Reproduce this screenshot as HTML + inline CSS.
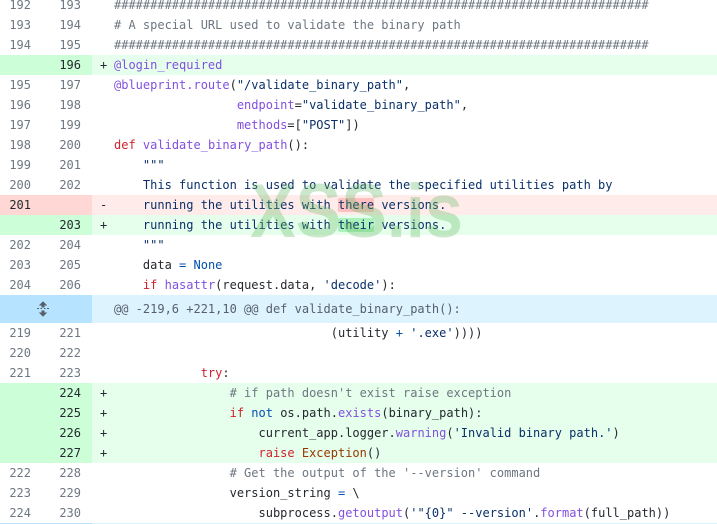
<!DOCTYPE html>
<html><head><meta charset="utf-8"><style>
*{margin:0;padding:0;box-sizing:border-box}
body{width:717px;height:524px;overflow:hidden;background:#fff;font-family:"DejaVu Sans Mono","Liberation Mono",monospace;font-size:12px;color:#24292f;position:relative}
.r{position:absolute;left:0;width:717px;height:20px;line-height:21px;white-space:pre}
.n1,.n2{position:absolute;top:0;height:100%;text-align:right;color:#6e7781}
.n1{left:0;width:31px}
.n2{left:31px;width:50px}
.g{position:absolute;left:0;top:0;width:92px;height:100%}
.s{position:absolute;left:100px;top:0}
.c{position:absolute;left:114px;top:0}
.add{background:#e6ffec}.add .g{background:#ccffd8}.add .n1,.add .n2,.del .n1,.del .n2{color:#24292f}
.del{background:#ffebe9}.del .g{background:#ffd7d5}
.cm{color:#6e7781}.k{color:#cf222e}.f{color:#8250df}.st{color:#0a3069}.b{color:#0550ae}.e{color:#953800}
.hd{background:#ffc1c0;border-radius:2px}.ha{background:#abf2bc;border-radius:2px}
.hunk{position:absolute;left:0;top:295px;width:717px;height:28px;background:#ddf4ff;line-height:28px;white-space:pre;color:#57606a}
.hunk .g{background:#b6e3ff;width:92px;height:28px}
.wm{position:absolute;left:250px;top:168px;font-family:"Liberation Sans",sans-serif;font-weight:bold;font-size:76px;color:rgba(95,185,95,0.32);transform:scaleX(0.9);transform-origin:left top;pointer-events:none}
</style></head><body>
<div class="r" style="top:-5px"><span class="n1">192</span><span class="n2">193</span><span class="c cm">##########################################################################</span></div>
<div class="r" style="top:15px"><span class="n1">193</span><span class="n2">194</span><span class="c cm"># A special URL used to validate the binary path</span></div>
<div class="r" style="top:35px"><span class="n1">194</span><span class="n2">195</span><span class="c cm">##########################################################################</span></div>
<div class="r add" style="top:55px"><span class="g"></span><span class="n2">196</span><span class="s">+</span><span class="c f">@login_required</span></div>
<div class="r" style="top:75px"><span class="n1">195</span><span class="n2">197</span><span class="c"><span class="f">@blueprint.route</span>(<span class="st">"/validate_binary_path"</span>,</span></div>
<div class="r" style="top:95px"><span class="n1">196</span><span class="n2">198</span><span class="c">                 <span class="f">endpoint</span>=<span class="st">"validate_binary_path"</span>,</span></div>
<div class="r" style="top:115px"><span class="n1">197</span><span class="n2">199</span><span class="c">                 <span class="f">methods</span>=[<span class="st">"POST"</span>])</span></div>
<div class="r" style="top:135px"><span class="n1">198</span><span class="n2">200</span><span class="c"><span class="k">def</span> <span class="f">validate_binary_path</span>():</span></div>
<div class="r" style="top:155px"><span class="n1">199</span><span class="n2">201</span><span class="c st">    """</span></div>
<div class="r" style="top:175px"><span class="n1">200</span><span class="n2">202</span><span class="c st">    This function is used to validate the specified utilities path by</span></div>
<div class="r del" style="top:195px"><span class="g"></span><span class="n1">201</span><span class="s">-</span><span class="c st">    running the utilities with <span class="hd">there</span> versions.</span></div>
<div class="r add" style="top:215px"><span class="g"></span><span class="n2">203</span><span class="s">+</span><span class="c st">    running the utilities with <span class="ha">their</span> versions.</span></div>
<div class="r" style="top:235px"><span class="n1">202</span><span class="n2">204</span><span class="c st">    """</span></div>
<div class="r" style="top:255px"><span class="n1">203</span><span class="n2">205</span><span class="c">    data <span class="b">=</span> <span class="b">None</span></span></div>
<div class="r" style="top:275px"><span class="n1">204</span><span class="n2">206</span><span class="c">    <span class="k">if</span> <span class="f">hasattr</span>(request.data, <span class="st">'decode'</span>):</span></div>
<div class="hunk"><span class="g" style="position:absolute"></span><svg style="position:absolute;left:35px;top:6px" width="16" height="16" viewBox="0 0 16 16"><path d="M8 1 L5 4 H7 V6 H9 V4 H11 Z M8 15 L5 12 H7 V10 H9 V12 H11 Z M2 7.5 H4 M5.5 7.5 H7 M9 7.5 H10.5 M12 7.5 H14" stroke="#57606a" stroke-width="1" fill="#57606a"/></svg><span style="position:absolute;left:114px">@@ -219,6 +221,10 @@ def validate_binary_path():</span></div>
<div class="r" style="top:323px"><span class="n1">219</span><span class="n2">221</span><span class="c">                              (utility <span class="b">+</span> <span class="st">'.exe'</span>))))</span></div>
<div class="r" style="top:343px"><span class="n1">220</span><span class="n2">222</span><span class="c"></span></div>
<div class="r" style="top:363px"><span class="n1">221</span><span class="n2">223</span><span class="c">            <span class="k">try</span>:</span></div>
<div class="r add" style="top:383px"><span class="g"></span><span class="n2">224</span><span class="s">+</span><span class="c cm">                # if path doesn't exist raise exception</span></div>
<div class="r add" style="top:403px"><span class="g"></span><span class="n2">225</span><span class="s">+</span><span class="c">                <span class="k">if</span> <span class="b">not</span> os.path.<span class="f">exists</span>(binary_path):</span></div>
<div class="r add" style="top:423px"><span class="g"></span><span class="n2">226</span><span class="s">+</span><span class="c">                    current_app.logger.<span class="f">warning</span>(<span class="st">'Invalid binary path.'</span>)</span></div>
<div class="r add" style="top:443px"><span class="g"></span><span class="n2">227</span><span class="s">+</span><span class="c">                    <span class="k">raise</span> <span class="e">Exception</span>()</span></div>
<div class="r" style="top:463px"><span class="n1">222</span><span class="n2">228</span><span class="c cm">                # Get the output of the '--version' command</span></div>
<div class="r" style="top:483px"><span class="n1">223</span><span class="n2">229</span><span class="c">                version_string <span class="b">=</span> \</span></div>
<div class="r" style="top:503px"><span class="n1">224</span><span class="n2">230</span><span class="c">                    subprocess.<span class="f">getoutput</span>(<span class="st">'"{0}" --version'</span>.<span class="f">format</span>(full_path))</span></div>
<div style="position:absolute;left:0;top:523px;width:717px;height:1px;background:#ddf4ff"></div>
<div style="position:absolute;left:0;top:523px;width:92px;height:1px;background:#b6e3ff"></div>
<div class="wm">XSS.is</div>
</body></html>
